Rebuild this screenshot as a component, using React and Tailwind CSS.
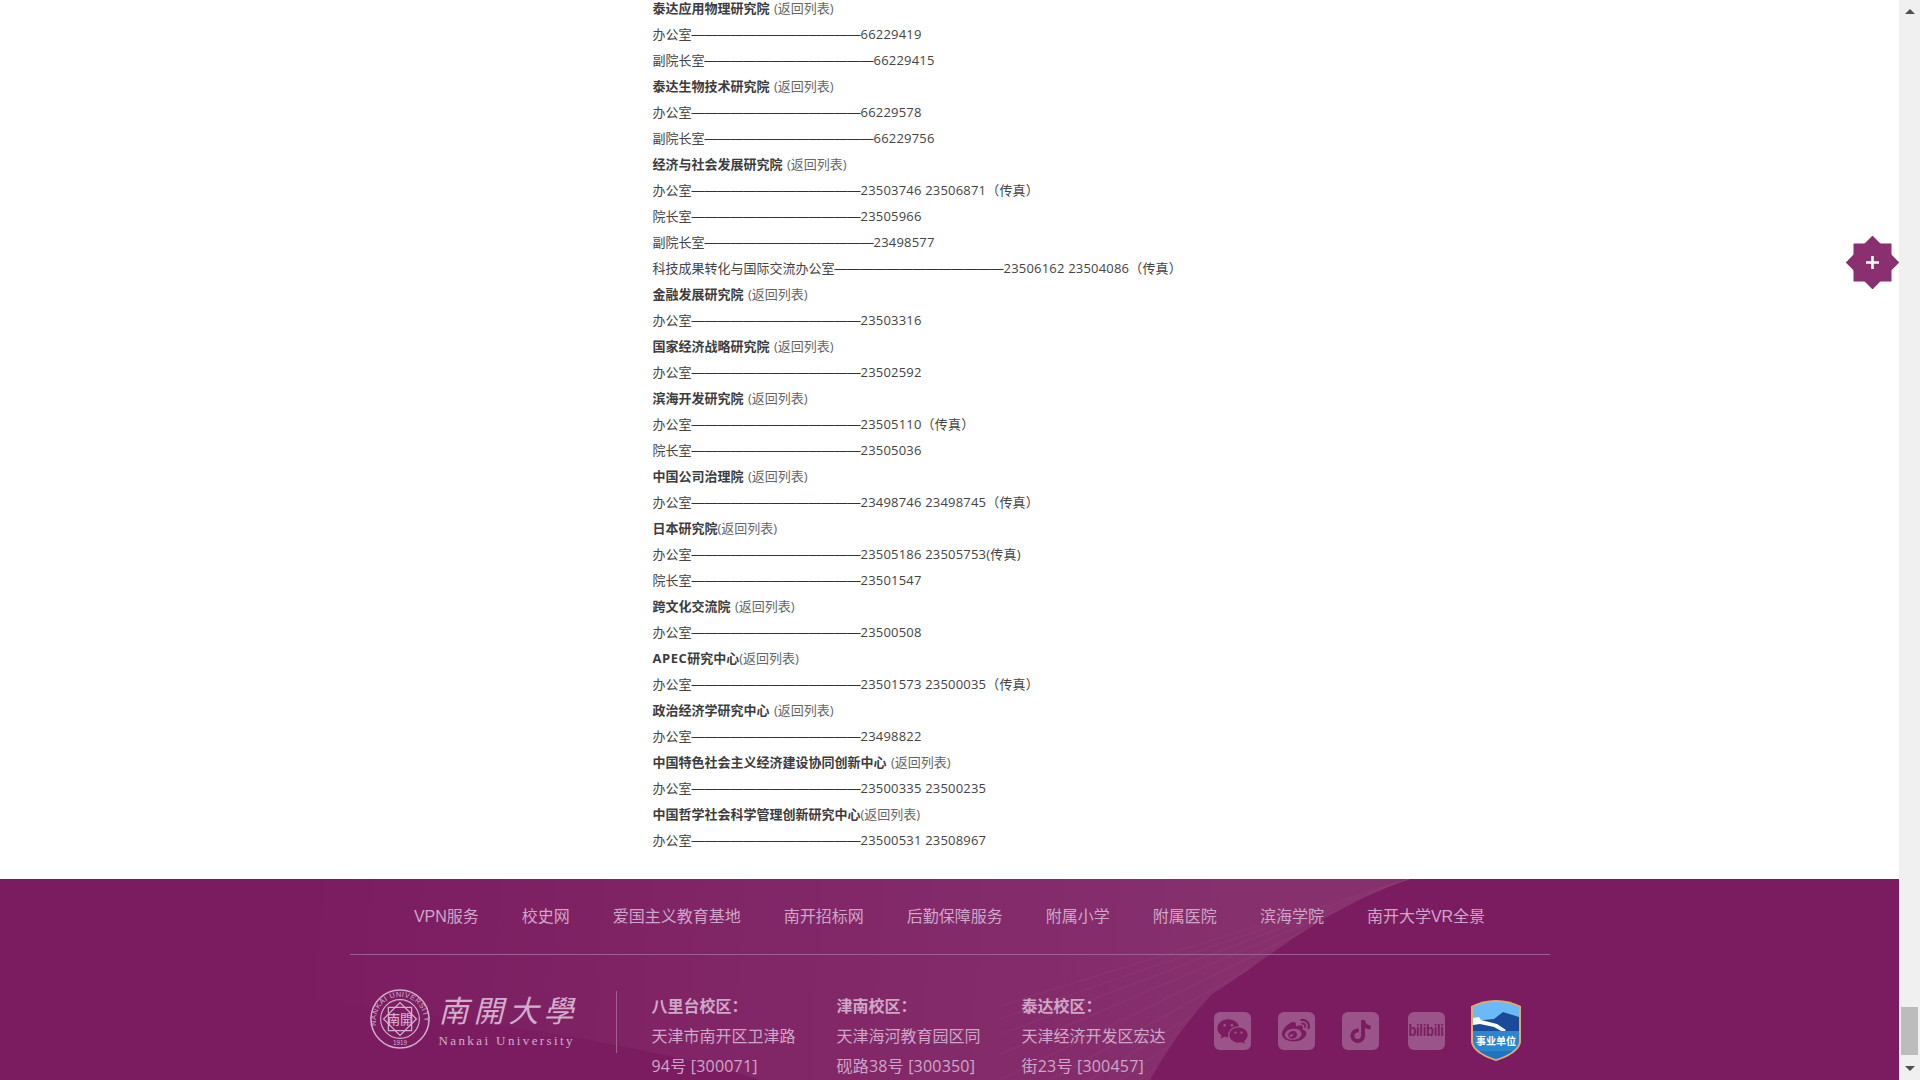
import { RiWechatFill } from 'react-icons/ri';
import { FaWeibo, FaTiktok } from 'react-icons/fa';

const DASHES = '—————————————';

// h = heading row, everything else is label + number
const rows = [
  { h: '泰达应用物理研究院', sp: true },
  { l: '办公室', n: '66229419' },
  { l: '副院长室', n: '66229415' },
  { h: '泰达生物技术研究院', sp: true },
  { l: '办公室', n: '66229578' },
  { l: '副院长室', n: '66229756' },
  { h: '经济与社会发展研究院', sp: true },
  { l: '办公室', n: '23503746 23506871（传真）' },
  { l: '院长室', n: '23505966' },
  { l: '副院长室', n: '23498577' },
  { l: '科技成果转化与国际交流办公室', n: '23506162 23504086（传真）' },
  { h: '金融发展研究院', sp: true },
  { l: '办公室', n: '23503316' },
  { h: '国家经济战略研究院', sp: true },
  { l: '办公室', n: '23502592' },
  { h: '滨海开发研究院', sp: true },
  { l: '办公室', n: '23505110（传真）' },
  { l: '院长室', n: '23505036' },
  { h: '中国公司治理院', sp: true },
  { l: '办公室', n: '23498746 23498745（传真）' },
  { h: '日本研究院' },
  { l: '办公室', n: '23505186 23505753(传真)' },
  { l: '院长室', n: '23501547' },
  { h: '跨文化交流院', sp: true },
  { l: '办公室', n: '23500508' },
  { pre: 'APEC', h: '研究中心' },
  { l: '办公室', n: '23501573 23500035（传真）' },
  { h: '政治经济学研究中心', sp: true },
  { l: '办公室', n: '23498822' },
  { h: '中国特色社会主义经济建设协同创新中心', sp: true },
  { l: '办公室', n: '23500335 23500235' },
  { h: '中国哲学社会科学管理创新研究中心' },
  { l: '办公室', n: '23500531 23508967' },
];

const links = ['VPN服务', '校史网', '爱国主义教育基地', '南开招标网', '后勤保障服务', '附属小学', '附属医院', '滨海学院', '南开大学VR全景'];

const campuses = [
  { name: '八里台校区：', addr: '天津市南开区卫津路', addr2: '94号 [300071]' },
  { name: '津南校区：', addr: '天津海河教育园区同', addr2: '砚路38号 [300350]' },
  { name: '泰达校区：', addr: '天津经济开发区宏达', addr2: '街23号 [300457]' },
];

// fan of thin streaks in the footer background
const fan = [760, 820, 880, 940, 1000, 1050, 1090, 1120, 1140];

const Row = ({ row }) =>
  row.h ? (
    <p className="h-[26px] whitespace-pre">
      <b className="font-bold text-[#3c3c3c]">
        {row.pre && <span className="tracking-[0.5px]">{row.pre}</span>}
        {row.h}
      </b>
      <span className={row.sp ? 'ml-[1px] text-[#666]' : 'text-[#666]'}>{row.sp ? ' (返回列表)' : '(返回列表)'}</span>
    </p>
  ) : (
    <p className="h-[26px] whitespace-pre">
      {row.l}
      <span className="font-['Liberation_Sans',sans-serif] text-[#333]">{DASHES}</span>
      <span className="tracking-[0.2px]">{row.n}</span>
    </p>
  );

const Seal = () => (
  <svg width="60" height="60" viewBox="0 0 62 62" fill="none" stroke="#d3adcc" className="shrink-0">
    <circle cx="31" cy="31" r="30" strokeWidth="1.6" />
    <circle cx="31" cy="31" r="20" strokeWidth="1.2" />
    <rect x="19" y="19" width="24" height="24" strokeWidth="1.3" />
    <rect x="19" y="19" width="24" height="24" strokeWidth="1.3" transform="rotate(45 31 31)" />
    <defs>
      <path id="sealArc" d="M6.5 38 A25 25 0 1 1 55.5 38" />
    </defs>
    <text fontSize="7.6" fill="#d3adcc" stroke="none" fontFamily="'Liberation Sans', sans-serif" letterSpacing="0.5">
      <textPath href="#sealArc">NANKAI UNIVERSITY</textPath>
    </text>
    <text x="31" y="58" textAnchor="middle" fontSize="6.5" fill="#d3adcc" stroke="none" fontFamily="'Liberation Sans', sans-serif">1919</text>
    <text x="31" y="36" textAnchor="middle" fontSize="13" fontWeight="500" fill="#d3adcc" stroke="none" fontFamily="'Noto Sans CJK TC', sans-serif">南開</text>
  </svg>
);

const Logo = () => (
  <div className="flex items-start gap-[9px] w-[206px] h-[62px] -mt-[2px]">
    <Seal />
    <div className="flex flex-col items-start">
      <span className="text-[30px] leading-[40px] tracking-[5px] italic font-normal text-[#d3adcc] whitespace-nowrap font-['Noto_Sans_CJK_TC',sans-serif]">南開大學</span>
      <span className="mt-[4px] text-[13px] leading-[16px] tracking-[2.4px] text-[#d3adcc] whitespace-nowrap font-['Liberation_Serif',serif]">Nankai University</span>
    </div>
  </div>
);

const Badge = () => (
  <svg width="52" height="63" viewBox="0 0 52 63" className="shrink-0 -ml-[2px] -mt-[13px]">
    <defs>
      <clipPath id="shield">
        <path d="M26 3 C34 3 42 5 49 8 V42 C49 50 38 56 26 60 C14 56 3 50 3 42 V8 C10 5 18 3 26 3 Z" />
      </clipPath>
    </defs>
    <path d="M26 1 C35 1 43 3 51 7 V42 C51 51 39 58 26 62 C13 58 1 51 1 42 V7 C9 3 17 1 26 1 Z" fill="#e0a970" />
    <g clipPath="url(#shield)">
      <rect width="52" height="63" fill="#69baf6" />
      <path d="M3 22 L24 20 L33 13 L49 18 V36 H3 Z" fill="#1c4a9b" />
      <path d="M3 19 L9 18 L11 21 L27 25 L36 31 L33 33 L24 28 L10 25 L3 26 Z" fill="#fff" />
      <rect y="32" width="52" height="31" fill="#2b86cf" />
      <rect y="52" width="52" height="11" fill="#1f74bf" />
    </g>
    <text x="26" y="46" textAnchor="middle" fontSize="10" fontWeight="700" fill="#fff" fontFamily="'Noto Sans CJK SC', sans-serif">事业单位</text>
  </svg>
);

const IconBox = ({ children, className = '' }) => (
  <div className={`w-[37px] h-[38px] rounded-md bg-[#9b5489] flex items-center justify-center text-[#7b1c60] ${className}`}>
    {children}
  </div>
);

export default function App() {
  return (
    <div className="relative flex h-screen overflow-hidden bg-white font-['Open_Sans','Noto_Sans_CJK_SC',sans-serif]">
      <div className="flex-1 min-w-0 overflow-hidden">
        {/* page is scrolled to the bottom, first row is cut a little */}
        <div className="w-[1200px] mx-auto -mt-[5px] pl-[303px] pb-[26px] text-[13px] leading-[26px] text-[#444]">
          {rows.map((row, i) => (
            <Row key={i} row={row} />
          ))}
        </div>

        <footer className="relative h-[300px] overflow-hidden bg-[#7b1c60] text-[#cfa6c8]">
          {/* light sweep behind the footer */}
          <svg className="absolute left-0 top-0 pointer-events-none" width="1899" height="201" viewBox="0 0 1899 201">
            <defs>
              <linearGradient id="sweep" gradientUnits="userSpaceOnUse" x1="300" y1="0" x2="1250" y2="60">
                <stop offset="0" stopColor="#fff" stopOpacity="0" />
                <stop offset="1" stopColor="#fff" stopOpacity="0.09" />
              </linearGradient>
              <clipPath id="fanClip">
                <path d="M1410 0 C1320 30 1255 90 1212 115 C1180 150 1165 175 1150 201 L1000 201 L1000 0 Z" />
              </clipPath>
            </defs>
            <path d="M1410 0 C1320 30 1255 90 1212 115 C1180 150 1165 175 1150 201 L760 201 C600 150 300 120 0 80 L0 0 Z" fill="url(#sweep)" />
            <g clipPath="url(#fanClip)" stroke="#fff" strokeOpacity="0.03" strokeWidth="1.5">
              {fan.map((x) => (
                <line key={x} x1="1410" y1="0" x2={x} y2="201" />
              ))}
            </g>
          </svg>

          <div className="relative w-[1200px] mx-auto">
            <nav className="h-[76px] flex items-center justify-center gap-[43px] border-b border-[#a0608f] text-[16px] whitespace-nowrap font-['Liberation_Sans','Noto_Sans_CJK_SC',sans-serif]">
              {links.map((t) => (
                <span key={t}>{t}</span>
              ))}
            </nav>

            <div className="flex items-start pt-[36px] pl-[20px]">
              <Logo />
              <div className="w-px h-[62px] bg-[#a0608f] ml-[40px] mr-[35px] shrink-0" />
              {campuses.map((c) => (
                <div key={c.name} className="w-[150px] mr-[35px] shrink-0 text-[16px] leading-[30px]">
                  <p className="font-bold">{c.name}</p>
                  <p>{c.addr}</p>
                  <p className="tracking-[0.2px] whitespace-nowrap">{c.addr2}</p>
                </div>
              ))}
              <div className="flex items-start gap-[27px] pt-[21px] ml-[7px]">
                <IconBox><RiWechatFill size={33} /></IconBox>
                <IconBox><FaWeibo size={28} /></IconBox>
                <IconBox><FaTiktok size={23} /></IconBox>
                <IconBox className="ml-[2px]">
                  <span className="text-[13px] font-bold tracking-[-0.3px] scale-y-125 font-['Liberation_Sans',sans-serif]">bilibili</span>
                </IconBox>
                <Badge />
              </div>
            </div>
          </div>
        </footer>
      </div>

      {/* browser scrollbar */}
      <div className="w-[21px] shrink-0 bg-[#f0f0f0] flex flex-col items-center pt-[9px] pb-[9px]">
        <div className="w-0 h-0 border-x-[5px] border-x-transparent border-b-[5px] border-b-[#505050]" />
        <div className="mt-auto w-[17px] h-[48px] bg-[#bcbcbc]" />
        <div className="mt-[11px] w-0 h-0 border-x-[5px] border-x-transparent border-t-[5px] border-t-[#505050]" />
      </div>

      {/* floating plus button */}
      <svg className="absolute left-[1846px] top-[236px]" width="53" height="53" viewBox="0 0 53 53">
        <g fill="#8a2f6f">
          <rect x="7.5" y="7.5" width="38" height="38" />
          <rect x="7.5" y="7.5" width="38" height="38" transform="rotate(45 26.5 26.5)" />
        </g>
        <path d="M26.5 20 V33 M20 26.5 H33" stroke="#fff" strokeWidth="2.6" />
      </svg>
    </div>
  );
}
